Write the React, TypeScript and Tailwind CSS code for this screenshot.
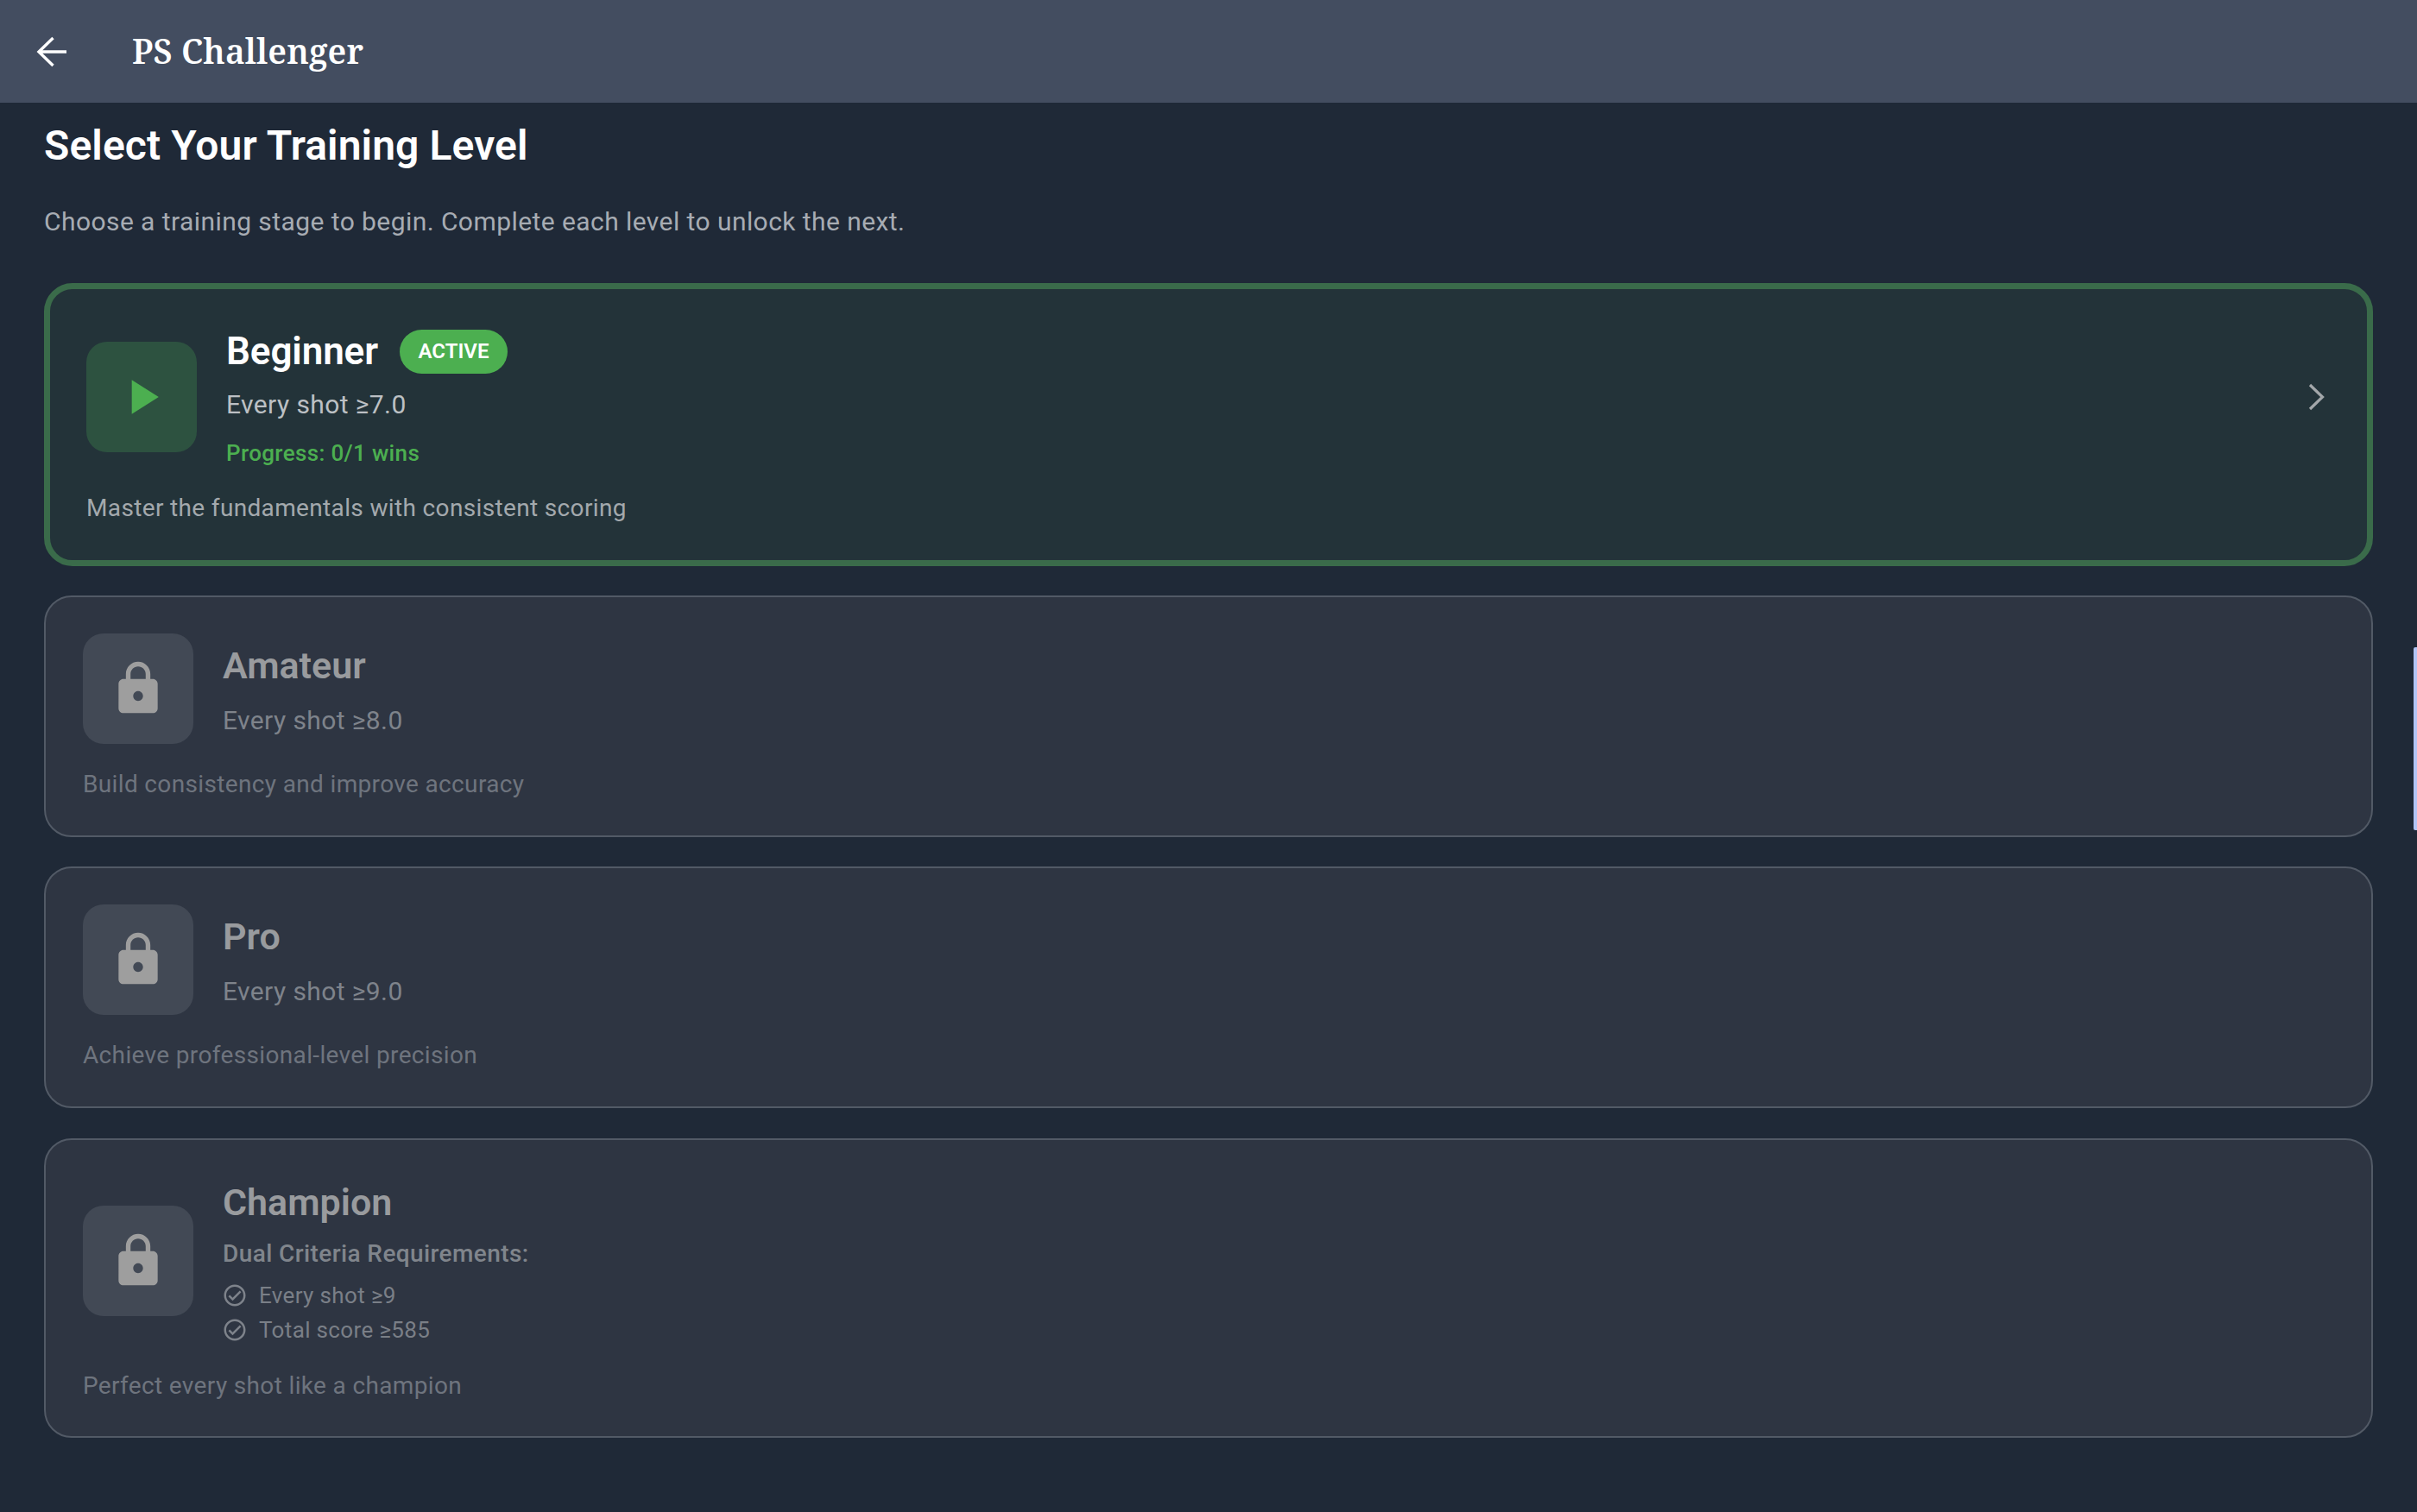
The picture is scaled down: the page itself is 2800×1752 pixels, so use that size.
import React from "react";

const LOCK = "M18 8h-1V6c0-2.76-2.24-5-5-5S7 3.24 7 6v2H6c-1.1 0-2 .9-2 2v10c0 1.1.9 2 2 2h12c1.1 0 2-.9 2-2V10c0-1.1-.9-2-2-2zm-6 9c-1.1 0-2-.9-2-2s.9-2 2-2 2 .9 2 2-.9 2-2 2zm3.1-9H8.9V6c0-1.71 1.39-3.1 3.1-3.1 1.71 0 3.1 1.39 3.1 3.1v2z";
const CHECK = "M16.59 7.58L10 14.17l-2.59-2.58L6 13l4 4 8-8zM12 2C6.48 2 2 6.48 2 12s4.48 10 10 10 10-4.48 10-10S17.52 2 12 2zm0 18c-4.42 0-8-3.58-8-8s3.58-8 8-8 8 3.58 8 8-3.58 8-8 8z";

function Icon({ d, className }: { d: string; className: string }) {
  return (
    <svg viewBox="0 0 24 24" fill="currentColor" className={className}>
      <path d={d} />
    </svg>
  );
}

function LockBox({ className = "" }: { className?: string }) {
  return (
    <div className={`flex h-[128px] w-[128px] shrink-0 items-center justify-center rounded-[24px] bg-[#424955] text-[#9e9e9e] ${className}`}>
      <Icon d={LOCK} className="h-[68px] w-[68px]" />
    </div>
  );
}

function LockedCard({ title, sub, desc }: { title: string; sub: string; desc: string }) {
  return (
    <div className="h-[280px] rounded-[32px] border-2 border-[#525a66] bg-[#2e3542] px-[43px] pt-[42px]">
      <div className="flex items-center gap-[34px]">
        <LockBox />
        <div className="flex h-[128px] flex-col">
          <div className="h-[76px] text-[43px] leading-[74px] font-semibold text-[#999b9e]">{title}</div>
          <div className="text-[30px] leading-[50px] tracking-[0.4px] text-[#7e838b]">{sub}</div>
        </div>
      </div>
      <div className="mt-[27px] text-[28px] leading-[40px] tracking-[0.35px] text-[#6e747e]">{desc}</div>
    </div>
  );
}

export default function App() {
  return (
    <div className="relative min-h-[1752px] overflow-hidden bg-[#1f2937] font-['Roboto',sans-serif] text-white">
      <header className="flex h-[119px] items-center bg-[#434d60] pl-[36px]">
        <svg viewBox="0 0 48 48" fill="none" stroke="currentColor" strokeWidth="3.4" className="h-[48px] w-[48px]">
          <path d="M41 24H10M25.5 8L9 24l16.5 16" />
        </svg>
        <h1 className="ml-[69px] font-['Noto_Serif','DejaVu_Serif',serif] text-[39px] font-semibold tracking-[0.1px]">PS Challenger</h1>
      </header>

      <main className="px-[51px]">
        <h2 className="mt-[22px] text-[48px] leading-[56px] font-semibold tracking-[0.1px]">Select Your Training Level</h2>
        <p className="mt-[38px] text-[30px] leading-[44px] tracking-[0.43px] text-[#a7acb3]">
          Choose a training stage to begin. Complete each level to unlock the next.
        </p>

        <div className="mt-[49px] flex flex-col gap-[34px]">
          <div className="h-[328px] rounded-[33px] border-[7px] border-[#3a6b4a] bg-[#233339] pt-[42px] pr-[32px] pl-[42px]">
            <div className="flex items-start gap-[34px]">
              <div className="mt-[19px] flex h-[128px] w-[128px] shrink-0 items-center justify-center rounded-[24px] bg-[#2d5240] text-[#4caf50]">
                <Icon d="M8 5v14l11-7z" className="h-[68px] w-[68px]" />
              </div>
              <div className="flex flex-1 flex-col">
                <div className="flex items-center">
                  <span className="text-[44px] leading-[60px] font-semibold tracking-[-0.1px]">Beginner</span>
                  <span className="ml-[25px] flex h-[51px] w-[125px] items-center justify-center rounded-full bg-[#4caf50] text-[24px] font-semibold">ACTIVE</span>
                </div>
                <div className="mt-[7px] text-[30px] leading-[50px] tracking-[0.4px] text-[#bcc0c4]">Every shot ≥7.0</div>
                <div className="mt-[11px] text-[26px] leading-[40px] font-medium tracking-[0.35px] text-[#4caf50]">Progress: 0/1 wins</div>
              </div>
              <svg viewBox="0 0 56 56" fill="none" stroke="currentColor" strokeWidth="3.2" className="mt-[55px] h-[56px] w-[56px] shrink-0 text-[#a3a7aa]">
                <path d="M22 14l14.5 14L22 42" />
              </svg>
            </div>
            <div className="mt-[24px] text-[28px] leading-[40px] tracking-[0.35px] text-[#a3a9ad]">Master the fundamentals with consistent scoring</div>
          </div>

          <LockedCard title="Amateur" sub="Every shot ≥8.0" desc="Build consistency and improve accuracy" />
          <LockedCard title="Pro" sub="Every shot ≥9.0" desc="Achieve professional-level precision" />

          <div className="mt-[1px] h-[347px] rounded-[32px] border-2 border-[#525a66] bg-[#2e3542] px-[43px] pt-[42px]">
            <div className="flex items-start gap-[34px]">
              <LockBox className="mt-[34px]" />
              <div className="flex flex-col">
                <div className="h-[60px] text-[43px] leading-[60px] font-semibold text-[#999b9e]">Champion</div>
                <div className="mt-[10px] text-[28px] leading-[40px] font-medium tracking-[0.4px] text-[#80858c]">Dual Criteria Requirements:</div>
                {["Every shot ≥9", "Total score ≥585"].map((t, i) => (
                  <div key={t} className={`flex h-[40px] items-center gap-[13px] text-[26px] tracking-[0.35px] text-[#7a7f87] ${i === 0 ? "mt-[8px]" : ""}`}>
                    <Icon d={CHECK} className="-ml-[1px] h-[30px] w-[30px] text-[#7e838b]" />
                    <span>{t}</span>
                  </div>
                ))}
              </div>
            </div>
            <div className="mt-[25px] text-[28px] leading-[40px] tracking-[0.35px] text-[#6e747e]">Perfect every shot like a champion</div>
          </div>
        </div>
      </main>

      <div className="absolute right-0 top-[750px] h-[212px] w-[4px] rounded-l-[2px] bg-[#b2c5f5]" />
    </div>
  );
}
